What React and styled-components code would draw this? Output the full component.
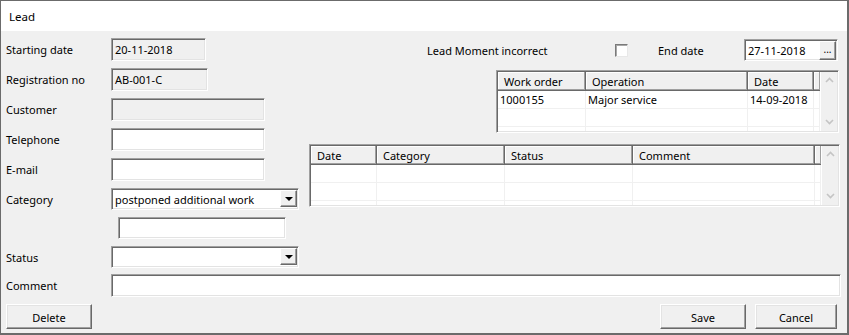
import styled, { createGlobalStyle } from 'styled-components';

const GlobalStyle = createGlobalStyle`
    html, body {
        margin: 0;
        padding: 0;
        background: #fff;
    }
    body {
        font-family: "Noto Sans", "Open Sans", sans-serif;
        font-size: 11px;
        color: #000;
    }
    * {
        box-sizing: border-box;
    }
`

const Janela = styled.div`
    width: 849px;
    height: 335px;
    border-style: solid;
    border-color: #6b6b6b;
    border-width: 1px 2px 2px 1px;
    background: #f0f0f0;
    display: flex;
    flex-direction: column;
`
const BarraTitulo = styled.div`
    height: 30px;
    background: #fff;
    display: flex;
    align-items: center;
    padding-left: 8px;
    font-size: 11.5px;
`
const Corpo = styled.div`
    flex: 1;
    padding: 7px 0 0 5px;
    display: flex;
    flex-direction: column;
`
const Topo = styled.div`
    display: flex;
    height: 236px;
`
const Formulario = styled.div`
    width: 303px;
    display: flex;
    flex-direction: column;
`
const Linha = styled.div`
    display: flex;
    align-items: flex-start;
    height: ${p => p.$h}px;
    flex-shrink: 0;
`
const Rotulo = styled.div`
    width: 105px;
    height: ${p => p.$h || 23}px;
    line-height: ${p => (p.$h || 23) + 1}px;
    white-space: nowrap;
`
const Caixa = styled.div`
    width: ${p => p.$w}px;
    height: ${p => p.$h || 23}px;
    margin-left: ${p => p.$ml || 0}px;
    background: ${p => (p.$off ? '#f0f0f0' : '#fff')};
    border: 1px solid;
    border-color: #a0a0a0 #fff #fff #a0a0a0;
    box-shadow: inset 1px 1px 0 #696969, inset -1px -1px 0 #e3e3e3;
    padding: 1px 3px 0 3px;
    line-height: ${p => (p.$h || 23) - 5}px;
    white-space: nowrap;
    display: flex;
    align-items: flex-start;
    justify-content: space-between;
`
const Texto = styled.span`
    padding-top: 1px;
`
const BotaoSeta = styled.div`
    width: 17px;
    height: 17px;
    background: #f0f0f0;
    border: 1px solid;
    border-color: #fff #696969 #696969 #fff;
    box-shadow: inset -1px -1px 0 #a0a0a0;
    display: flex;
    align-items: center;
    justify-content: center;
    margin-right: -2px;

    &::after {
        content: '';
        border-left: 4px solid transparent;
        border-right: 4px solid transparent;
        border-top: 4px solid #000;
        margin-top: 1px;
    }
`
const BotaoPontos = styled.div`
    width: 17px;
    height: 19px;
    background: #f0f0f0;
    border: 1px solid;
    border-color: #fff #696969 #696969 #fff;
    box-shadow: inset -1px -1px 0 #a0a0a0;
    font-size: 10px;
    line-height: 14px;
    text-align: center;
    margin-right: -2px;
    margin-top: 0;
`
const PainelDireito = styled.div`
    flex: 1;
    display: flex;
    flex-direction: column;
    align-items: flex-end;
`
const LinhaTopo = styled.div`
    align-self: stretch;
    height: 23px;
    display: flex;
    align-items: center;
    padding-left: 118px;
`
const Celula = styled.div`
    width: ${p => p.$w}px;
    white-space: nowrap;
    display: flex;
    align-items: center;
    padding-top: 1px;
`
const Check = styled.div`
    width: 13px;
    height: 13px;
    background: #fff;
    border: 1px solid;
    border-color: #7a7a7a #e8e8e8 #e8e8e8 #7a7a7a;
    box-shadow: inset 1px 1px 0 #a8a8a8;
`
const Tabela = styled.div`
    width: ${p => p.$w}px;
    height: 63px;
    margin-top: ${p => p.$mt}px;
    margin-right: ${p => p.$mr}px;
    border: 1px solid;
    border-color: #a0a0a0 #fff #fff #a0a0a0;
    box-shadow: inset 1px 1px 0 #696969, inset -1px -1px 0 #e3e3e3;
    padding: 1px;
    display: flex;
    background: #fff;
`
const Grade = styled.div`
    flex: 1;
    overflow: hidden;
`
const LinhaGrade = styled.div`
    display: grid;
    grid-template-columns: ${p => p.$cols};
    height: ${p => p.$h}px;
`
const Cabecalho = styled.div`
    background: #f0f0f0;
    border-right: 1px solid #696969;
    border-bottom: 1px solid #696969;
    box-shadow: inset -1px -1px 0 #a0a0a0, inset 1px 1px 0 #fff;
    padding-left: 6px;
    line-height: 19px;
    white-space: nowrap;
    overflow: hidden;
`
const Dado = styled.div`
    border-right: 1px solid #f0f0f0;
    border-bottom: 1px solid #f0f0f0;
    padding-left: 2px;
    line-height: 18px;
    white-space: nowrap;
    overflow: hidden;
`
const Rolagem = styled.div`
    width: 17px;
    background: #f0f0f0;
    border-left: 1px solid #fff;
    display: flex;
    flex-direction: column;
    justify-content: space-between;
    align-items: center;
    padding: 5px 0 6px;
`
const LinhaComentario = styled.div`
    display: flex;
    align-items: flex-start;
    height: 30px;
`
const LinhaBotoes = styled.div`
    display: flex;
    align-items: flex-start;
    padding-right: 10px;
`
const Botao = styled.div`
    width: ${p => p.$w}px;
    height: 25px;
    margin-left: ${p => p.$ml || 0}px;
    background: #f0f0f0;
    border: 1px solid;
    border-color: #fff #696969 #696969 #fff;
    box-shadow: inset -1px -1px 0 #a0a0a0, inset 1px 1px 0 #e3e3e3;
    display: flex;
    align-items: center;
    justify-content: center;
    padding-top: 1px;
`
const Espaco = styled.div`
    flex: 1;
`

function Seta({ up }) {
    return (
        <svg width="9" height="6" viewBox="0 0 9 6">
            <polyline
                points={up ? '1,5 4.5,1.5 8,5' : '1,1 4.5,4.5 8,1'}
                fill="none"
                stroke="#c4c4c4"
                strokeWidth="1.6"
            />
        </svg>
    )
}

function GradeDados({ largura, mt, mr, colunas, titulos, linhas }) {
    const cols = colunas.map(c => c + 'px').join(' ')
    return (
        <Tabela $w={largura} $mt={mt} $mr={mr}>
            <Grade>
                <LinhaGrade $cols={cols} $h={19}>
                    {titulos.map((t, i) => <Cabecalho key={i}>{t}</Cabecalho>)}
                </LinhaGrade>
                {linhas.map((linha, i) => (
                    <LinhaGrade key={i} $cols={cols} $h={18}>
                        {linha.map((v, j) => <Dado key={j}>{v}</Dado>)}
                    </LinhaGrade>
                ))}
            </Grade>
            <Rolagem>
                <Seta up />
                <Seta />
            </Rolagem>
        </Tabela>
    )
}

export default function App() {
    const ordens = [
        ['1000155', 'Major service', '14-09-2018', ''],
        ['', '', '', ''],
        ['', '', '', ''],
    ]
    const vazias = [
        ['', '', '', '', ''],
        ['', '', '', '', ''],
        ['', '', '', '', ''],
    ]

    return (
        <>
            <GlobalStyle />
            <Janela>
                <BarraTitulo>Lead</BarraTitulo>
                <Corpo>
                    <Topo>
                        <Formulario>
                            <Linha $h={30}>
                                <Rotulo>Starting date</Rotulo>
                                <Caixa $w={95} $off><Texto>20-11-2018</Texto></Caixa>
                            </Linha>
                            <Linha $h={30}>
                                <Rotulo>Registration no</Rotulo>
                                <Caixa $w={97} $off><Texto>AB-001-C</Texto></Caixa>
                            </Linha>
                            <Linha $h={30}>
                                <Rotulo>Customer</Rotulo>
                                <Caixa $w={154} $off />
                            </Linha>
                            <Linha $h={30}>
                                <Rotulo>Telephone</Rotulo>
                                <Caixa $w={154} />
                            </Linha>
                            <Linha $h={30}>
                                <Rotulo>E-mail</Rotulo>
                                <Caixa $w={154} />
                            </Linha>
                            <Linha $h={29}>
                                <Rotulo $h={22}>Category</Rotulo>
                                <Caixa $w={188} $h={22}>
                                    <Texto>postponed additional work</Texto>
                                    <BotaoSeta />
                                </Caixa>
                            </Linha>
                            <Linha $h={29}>
                                <Caixa $w={168} $h={22} $ml={112} />
                            </Linha>
                            <Linha $h={28}>
                                <Rotulo $h={22}>Status</Rotulo>
                                <Caixa $w={188} $h={22}>
                                    <Texto />
                                    <BotaoSeta />
                                </Caixa>
                            </Linha>
                        </Formulario>

                        <PainelDireito>
                            <LinhaTopo>
                                <Celula $w={188}>Lead Moment incorrect</Celula>
                                <Celula $w={43}><Check /></Celula>
                                <Celula $w={86}>End date</Celula>
                                <Caixa $w={94} $h={22}>
                                    <Texto>27-11-2018</Texto>
                                    <BotaoPontos>...</BotaoPontos>
                                </Caixa>
                            </LinhaTopo>

                            <GradeDados
                                largura={343}
                                mt={9}
                                mr={8}
                                colunas={[88, 162, 66, 6]}
                                titulos={['Work order', 'Operation', 'Date', '']}
                                linhas={ordens}
                            />

                            <GradeDados
                                largura={531}
                                mt={11}
                                mr={7}
                                colunas={[66, 128, 128, 182, 6]}
                                titulos={['Date', 'Category', 'Status', 'Comment', '']}
                                linhas={vazias}
                            />
                        </PainelDireito>
                    </Topo>

                    <LinhaComentario>
                        <Rotulo>Comment</Rotulo>
                        <Caixa $w={730} />
                    </LinhaComentario>

                    <LinhaBotoes>
                        <Botao $w={86}>Delete</Botao>
                        <Espaco />
                        <Botao $w={86}>Save</Botao>
                        <Botao $w={82} $ml={9}>Cancel</Botao>
                    </LinhaBotoes>
                </Corpo>
            </Janela>
        </>
    )
}
